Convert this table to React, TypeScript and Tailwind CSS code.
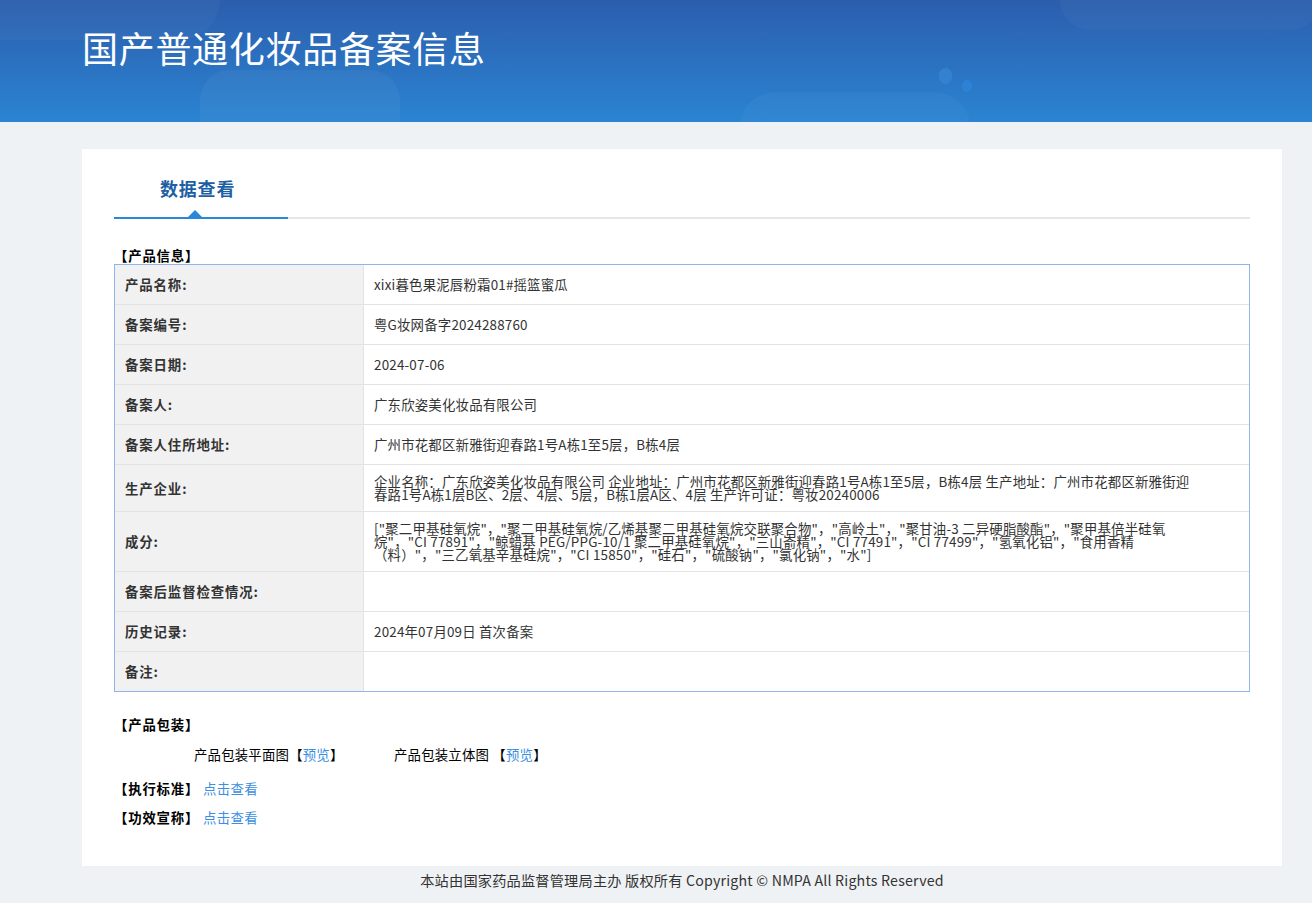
import React from 'react';

const rows: { label: string; value: string }[] = [
  { label: '产品名称:', value: 'xixi暮色果泥唇粉霜01#摇篮蜜瓜' },
  { label: '备案编号:', value: '粤G妆网备字2024288760' },
  { label: '备案日期:', value: '2024-07-06' },
  { label: '备案人:', value: '广东欣姿美化妆品有限公司' },
  { label: '备案人住所地址:', value: '广州市花都区新雅街迎春路1号A栋1至5层，B栋4层' },
  {
    label: '生产企业:',
    value:
      '企业名称：广东欣姿美化妆品有限公司 企业地址：广州市花都区新雅街迎春路1号A栋1至5层，B栋4层 生产地址：广州市花都区新雅街迎春路1号A栋1层B区、2层、4层、5层，B栋1层A区、4层 生产许可证：粤妆20240006',
  },
  {
    label: '成分:',
    value:
      '["聚二甲基硅氧烷"，"聚二甲基硅氧烷/乙烯基聚二甲基硅氧烷交联聚合物"，"高岭土"，"聚甘油-3 二异硬脂酸酯"，"聚甲基倍半硅氧烷"，"CI 77891"，"鲸蜡基 PEG/PPG-10/1 聚二甲基硅氧烷"，"三山嵛精"，"CI 77491"，"CI 77499"，"氢氧化铝"，"食用香精（料）"，"三乙氧基辛基硅烷"，"CI 15850"，"硅石"，"硫酸钠"，"氯化钠"，"水"]',
  },
  { label: '备案后监督检查情况:', value: '' },
  { label: '历史记录:', value: '2024年07月09日 首次备案' },
  { label: '备注:', value: '' },
];

export default function App() {
  return (
    <div
      className="min-h-[903px] bg-[#eff2f5] text-[#333]"
      style={{ fontFamily: '"Noto Sans CJK SC", "Liberation Sans", sans-serif' }}
    >
      {/* Header */}
      <header className="relative h-[122px] overflow-hidden bg-gradient-to-b from-[#2b5ead] to-[#2a84d2]">
        <div className="absolute left-[200px] top-[70px] h-[90px] w-[200px] rounded-t-[30px] bg-white/[0.04]" />
        <div className="absolute left-[-80px] top-[-40px] h-[80px] w-[300px] rounded-full bg-white/[0.03]" />
        <div className="absolute left-[1060px] top-[-30px] h-[60px] w-[260px] rounded-full bg-white/[0.03]" />
        <div className="absolute left-[740px] top-[92px] h-[70px] w-[230px] rounded-full bg-white/[0.03]" />
        <div className="absolute left-[939px] top-[68px] h-[16px] w-[13px] rounded-full bg-[#3a88da]/60" />
        <div className="absolute left-[962px] top-[80px] h-[12px] w-[10px] rounded-full bg-[#2f86dc]/70" />
        <div className="relative ml-[82px] pt-[23px] text-[36px] leading-[48px] tracking-[0.7px] text-white">
          国产普通化妆品备案信息
        </div>
      </header>

      {/* Card */}
      <main className="ml-[82px] mt-[27px] w-[1200px] bg-white px-[32px] pb-[40px] pt-[24px]">
        {/* Tabs */}
        <div className="flex border-b-2 border-[#e6e6e6]">
          <div className="relative -mb-[2px] w-[174px] border-b-2 border-[#2a88d8] pb-[14px] pl-[46px] text-[18px] font-bold leading-[30px] tracking-[0.8px] text-[#1d5fa5]">
            数据查看
            <span className="absolute bottom-0 left-[74px] h-0 w-0 border-x-[7px] border-b-[7px] border-x-transparent border-b-[#2a88d8]" />
          </div>
        </div>

        {/* Product info */}
        <div className="mt-[27px] text-[13.4px] font-bold leading-[18px] tracking-[0.8px] text-black">【产品信息】</div>
        <div className="border border-[#90b6e8]">
          {rows.map((r, i) => (
            <div key={r.label} className={`flex ${i > 0 ? 'border-t border-[#e3e3e3]' : ''}`}>
              <div className="flex w-[249px] shrink-0 items-center border-r border-[#e3e3e3] bg-[#f1f1f1] px-[10px] text-[13.4px] font-bold tracking-[0.9px] text-[#333]">
                {r.label}
              </div>
              <div className="flex min-h-[39px] flex-1 items-center py-[10px] pl-[10px] pr-[52px] text-[13.4px] leading-[13px] tracking-[0.2px] text-[#333]">
                {r.value}
              </div>
            </div>
          ))}
        </div>

        {/* Packaging */}
        <div className="mt-[23px] text-[13.4px] font-bold leading-[18px] tracking-[0.8px] text-black">【产品包装】</div>
        <div className="mt-[12px] flex pl-[80px] text-[13.4px] leading-[18px] tracking-[0.2px] text-black">
          <span className="w-[200px]">
            产品包装平面图【<span className="text-[#3b8ee0]">预览</span>】
          </span>
          <span>
            产品包装立体图 【<span className="text-[#3b8ee0]">预览</span>】
          </span>
        </div>

        <div className="mt-[16px] flex text-[13.4px] leading-[18px]">
          <span className="w-[89px] font-bold tracking-[0.8px] text-black">【执行标准】</span>
          <span className="tracking-[0.4px] text-[#3b8ee0]">点击查看</span>
        </div>
        <div className="mt-[11px] flex text-[13.4px] leading-[18px]">
          <span className="w-[89px] font-bold tracking-[0.8px] text-black">【功效宣称】</span>
          <span className="tracking-[0.4px] text-[#3b8ee0]">点击查看</span>
        </div>
      </main>

      {/* Footer */}
      <footer className="ml-[82px] w-[1200px] pt-[4px] text-center text-[14.2px] leading-[20px] tracking-[0.2px] text-[#333]">
        本站由国家药品监督管理局主办 版权所有 Copyright © NMPA All Rights Reserved
      </footer>
    </div>
  );
}
